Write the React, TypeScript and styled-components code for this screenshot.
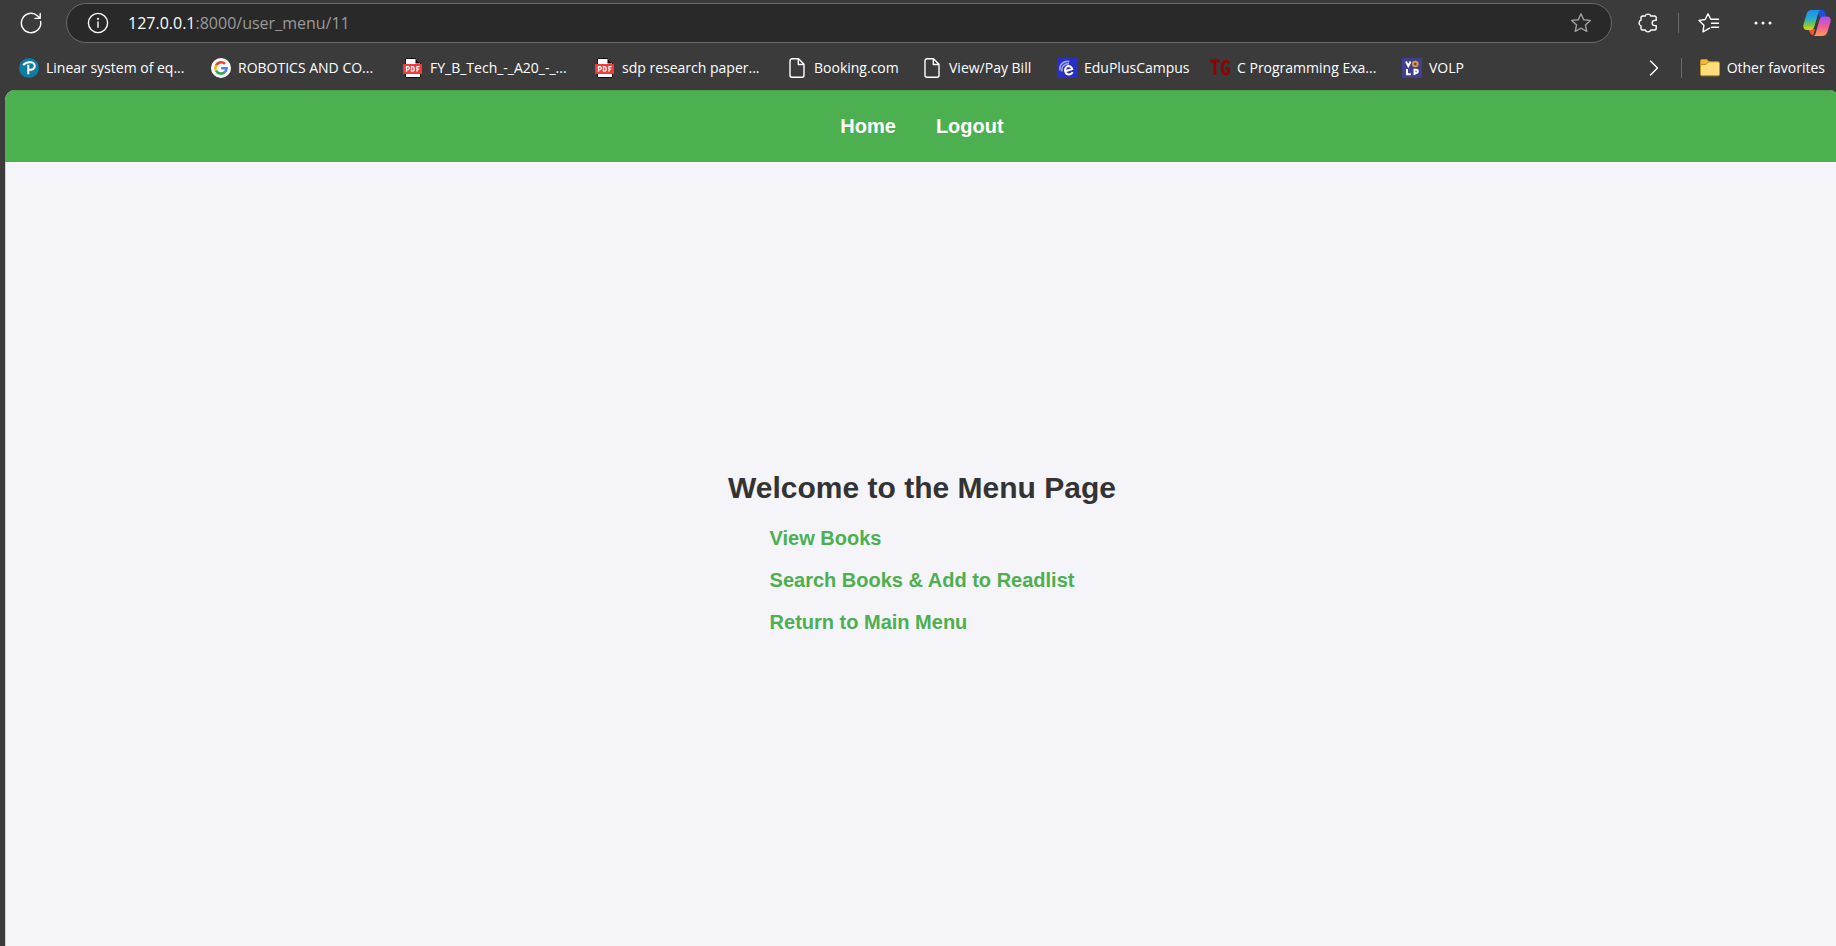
import React from "react";
import styled, { createGlobalStyle } from "styled-components";

const GlobalStyle = createGlobalStyle`
  *, *::before, *::after { box-sizing: border-box; }
  body { margin: 0; background: #3b3b3b; }
`;

const Window = styled.div`
  min-height: 100vh;
  display: flex;
  flex-direction: column;
  overflow: hidden;
  background: #3b3b3b;
  color: #fff;
  font-family: "Open Sans", "Noto Sans", sans-serif;
`;

const Toolbar = styled.header`
  display: flex;
  align-items: center;
  height: 46px;
  padding: 0 5px 0 17px;
`;

const IconButton = styled.button`
  display: grid;
  place-items: center;
  flex: none;
  width: 28px;
  height: 28px;
  padding: 0;
  border: 0;
  background: none;
  color: inherit;
`;

const AddressBar = styled.form`
  flex: 1;
  min-width: 0;
  display: flex;
  align-items: center;
  height: 40px;
  margin: 0 22px 0 21px;
  padding: 0 16px 0 17px;
  border: 1px solid #6b6b6b;
  border-radius: 20px;
  background: #292929;
  font-size: 16px;
  line-height: 22px;
`;

const Host = styled.label`
  margin-left: 16px;
`;

const Path = styled.input`
  flex: 1;
  min-width: 0;
  padding: 0;
  border: 0;
  outline: 0;
  background: none;
  color: #9a9a9a;
  font: inherit;
`;

const ToolGroup = styled.div<{ $gap: number }>`
  display: flex;
  align-items: center;
  gap: ${(p) => p.$gap}px;
`;

const Divider = styled.span`
  flex: none;
  width: 1px;
  height: 20px;
  background: #6b6b6b;
`;

const BookmarkBar = styled.nav`
  display: flex;
  align-items: center;
  height: 44px;
  padding: 0 11px 0 19px;
  font-size: 14px;
`;

const BookmarkList = styled.ul`
  flex: 1;
  min-width: 0;
  display: flex;
  margin: 0;
  padding: 0;
  list-style: none;
  overflow: hidden;
`;

const BookmarkItem = styled.li<{ $width: number }>`
  flex: none;
  width: ${(p) => p.$width}px;
`;

const BookmarkLink = styled.a`
  display: flex;
  align-items: center;
  gap: 7px;
  color: #fff;
  line-height: 20px;
  text-decoration: none;
  white-space: nowrap;

  svg { flex: none; }
`;

const BookmarkTools = styled.div`
  display: flex;
  align-items: center;
  gap: 13px;

  ${Divider} { margin-right: 5px; }
`;

const Page = styled.div`
  flex: 1;
  display: flex;
  flex-direction: column;
  margin: 0 -3px 0 5px;
  border-radius: 10px 10px 0 0;
  overflow: hidden;
  background: #f4f4f9;
  font-family: "Liberation Sans", Arial, sans-serif;
  font-weight: 700;
  font-size: 20px;
`;

const SiteNav = styled.nav`
  display: flex;
  justify-content: center;
  align-items: center;
  gap: 40px;
  height: 72px;
  background: #4caf50;
  box-shadow: inset 0 1px #479f4b;
`;

const NavLink = styled.a`
  color: #fff;
  text-decoration: none;
`;

const Main = styled.main`
  flex: 1;
  display: flex;
  flex-direction: column;
  align-items: center;
  justify-content: center;
  padding-bottom: 5px;
  box-shadow: inset 1px 0 #d0d0d6;
`;

const Title = styled.h1`
  margin: 0 0 22px;
  color: #333;
  font-size: 30px;
  line-height: 34px;
`;

const Menu = styled.ul`
  display: grid;
  gap: 20px;
  margin: 0;
  padding: 0;
  list-style: none;
  line-height: 22px;
`;

const MenuLink = styled.a`
  color: #4caf50;
  text-decoration: none;
`;

const Line = styled.svg.attrs({ fill: "none", stroke: "currentColor", strokeLinecap: "round", strokeLinejoin: "round" })`
  display: block;
  stroke-width: 1.4px;
`;

const STAR = "M12 2.8l2.7 5.9 6.6.7-4.9 4.5 1.4 6.6-5.8-3.3-5.8 3.3 1.4-6.6L2.7 9.4l6.6-.7z";

const RefreshIcon = () => (
  <Line width="24" height="24" viewBox="0 0 24 24">
    <path d="M21.6 10.4A9.7 9.7 0 1 1 18.6 4.9l2.2 2.1M21.2 2.4v5h-5.2" />
  </Line>
);

const InfoIcon = () => (
  <Line width="24" height="24" viewBox="0 0 24 24">
    <circle cx="12" cy="12" r="9.6" />
    <path d="M12 11v5.2" />
    <circle cx="12" cy="7.8" r=".4" fill="currentColor" />
  </Line>
);

const StarIcon = () => (
  <Line width="24" height="24" viewBox="0 0 24 24" color="#a0a0a0">
    <path d={STAR} />
  </Line>
);

const PuzzleIcon = () => (
  <Line width="24" height="24" viewBox="0 0 24 24">
    <path d="M6.800 5H9.200a2.900 2.600 0 0 1 5.600 0h3.600c1 0 1.800.8 1.800 1.800v2.600h-1.400a2.600 2.600 0 0 0 0 5.200h1.400v2.600c0 1-.8 1.800-1.800 1.800h-3.600a2.900 2.600 0 0 1-5.600 0H6.800c-1 0-1.800-.8-1.800-1.800v-2.400a2.600 2.900 0 0 1 0-5.600V6.800C5 5.800 5.800 5 6.800 5z" />
  </Line>
);

const FavoritesIcon = () => (
  <Line width="24" height="24" viewBox="0 0 24 24">
    <path d="M12.600 17.200L6 20.800l.9-6.500L2 9.400l6.200-.9L11 2.800l2.800 5.500h7.700M14.500 12.300h7M14.500 16.300h7" />
  </Line>
);

const DotsIcon = () => (
  <svg width="24" height="24" viewBox="0 0 24 24" fill="currentColor">
    <circle cx="5" cy="12" r="1.5" />
    <circle cx="12" cy="12" r="1.5" />
    <circle cx="19" cy="12" r="1.5" />
  </svg>
);

const CopilotIcon = () => (
  <svg width="28" height="28" viewBox="0 0 28 28">
    <defs>
      <linearGradient id="cpLeft" x1="0" y1="0" x2="0" y2="1">
        <stop offset="0" stopColor="#1b8fe8" />
        <stop offset=".4" stopColor="#22a8d8" />
        <stop offset=".7" stopColor="#6cc35a" />
        <stop offset="1" stopColor="#f2cb10" />
      </linearGradient>
      <linearGradient id="cpRight" x1="0" y1="0" x2="0" y2="1">
        <stop offset="0" stopColor="#a950f0" />
        <stop offset=".5" stopColor="#ee5c9c" />
        <stop offset="1" stopColor="#ff9a50" />
      </linearGradient>
    </defs>
    <path d="M13 1h6c2 0 2.700 1 3.200 2.800L23.400 8H17z" fill="#1d50d8" />
    <path d="M5 20h7l-1.500 5.800C8.500 26.300 7.400 25 7 23.500z" fill="#f0552c" />
    <path d="M9 1h8.500c-1.400.6-1.900 1.800-2.400 3.500l-3.600 12.700C10.800 19.600 9.600 21 7.200 21H4.100C1 21-.3 18.700.500 15.500L3.600 5C4.500 2.200 6 1 9 1z" fill="url(#cpLeft)" />
    <path d="M19 27h-8.500c1.400-.6 1.900-1.800 2.400-3.500l3.600-12.700C17.200 8.400 18.400 7.500 20.800 7.500h3.100c3.100 0 4.400 2.300 3.600 5.500L24.400 23C23.500 25.800 22 27 19 27z" fill="url(#cpRight)" />
  </svg>
);

const PearsonIcon = () => (
  <svg width="20" height="20" viewBox="0 0 20 20">
    <circle cx="10" cy="10" r="10" fill="#117ca3" />
    <path d="M4.200 7.200C6 4.700 9 3.800 12 4.300c3.200.5 4.500 2.900 3.400 5.200-.9 1.900-3.200 2.700-5.200 2.100M9.300 6.800v9.500" fill="none" stroke="#fff" strokeWidth="2" />
  </svg>
);

const GoogleIcon = () => (
  <svg width="20" height="20" viewBox="0 0 20 20">
    <circle cx="10" cy="10" r="10" fill="#fff" />
    <g fill="none" strokeWidth="2.600">
      <path d="M14 5.900A5.700 5.700 0 0 0 5 7.300" stroke="#ea4335" />
      <path d="M5 7.300a5.700 5.700 0 0 0 0 5.400" stroke="#fbbc05" />
      <path d="M5 12.700a5.700 5.700 0 0 0 8.700 1.600" stroke="#34a853" />
      <path d="M13.700 14.300a5.700 5.700 0 0 0 1.900-4H10.200" stroke="#4285f4" />
    </g>
  </svg>
);

const PdfIcon = () => (
  <svg width="20" height="20" viewBox="0 0 20 20">
    <path d="M2.500.5h10.500l4.500 4.500v14.500h-15z" fill="#fff" stroke="#111" />
    <path d="M12.500.5l5 5h-5z" fill="#111" />
    <rect x="0" y="6" width="19" height="10" rx="1" fill="#f23c3c" />
    <path d="M3.500 13.800V8.700h1.300a1.400 1.400 0 0 1 0 2.900H3.500M8.500 8.700v4.400h.7c2.600 0 2.600-4.400 0-4.400zM14 13.800V8.700h2.600M14 11.300h2.200" fill="none" stroke="#fff" strokeWidth="1.300" />
  </svg>
);

const FileIcon = () => (
  <Line width="20" height="20" viewBox="0 0 20 20">
    <path d="M5 .8h6.500L17 6.300V17.200a2 2 0 0 1-2 2H5a2 2 0 0 1-2-2V2.800a2 2 0 0 1 2-2zM11.300 1v5.500H17" />
  </Line>
);

const EduIcon = () => (
  <svg width="20" height="20" viewBox="0 0 20 20" fill="none">
    <rect width="20" height="20" fill="#2a2fc4" />
    <path d="M3 12.500C2 7 6 2.500 12.500 3.500M5 13.500C4 9 7 5.500 12 5.600" stroke="#9fa3ee" strokeWidth="1.600" />
    <path d="M8.200 13.300l7-2.300c-.8-3-4-3.700-5.900-1.900-2.500 2.600-1 7.300 2.400 7.300 1.900 0 3.200-.9 3.900-2.300" stroke="#fff" strokeWidth="2" />
  </svg>
);

const TgIcon = () => (
  <svg width="20" height="20" viewBox="0 0 20 20" fill="none" stroke="#8c0505" strokeWidth="3">
    <path d="M0 3h9.500M4.800 3v14M19 5.500c-1.500-3-6.800-3.300-6.800 4.300 0 8.300 6.200 6.700 6.300 4.200v-3.500h-3" />
  </svg>
);

const VolpIcon = () => (
  <svg width="20" height="20" viewBox="0 0 20 20" fill="none" stroke="#fff" strokeWidth="2">
    <rect width="20" height="20" fill="#40408f" stroke="none" />
    <path d="M4 3.500L6.300 8l2.300-4.500M5 11v5.300h3.800M12.500 17v-5.300h1.700a1.500 1.500 0 0 1 0 3.200h-1.700" />
    <circle cx="13.300" cy="6" r="2.300" stroke="#e09a28" />
  </svg>
);

const ChevronIcon = () => (
  <Line width="20" height="20" viewBox="0 0 20 20">
    <path d="M6.500 3l7 7-7 7" />
  </Line>
);

const FolderIcon = () => (
  <svg width="20" height="20" viewBox="0 0 20 20" stroke="#c4921c">
    <path d="M.5 3A1.500 1.500 0 0 1 2 1.500h5L9 3.800v2.700H.5z" fill="#f5b82e" />
    <path d="M.5 6.500h5c1.500 0 2-2.700 3.500-2.700h9A1.500 1.500 0 0 1 19.500 5.300v11a1.500 1.500 0 0 1-1.500 1.500H2a1.500 1.500 0 0 1-1.500-1.500z" fill="#ffdc7c" />
  </svg>
);

const bookmarks = [
  { title: "Linear system of eq...", width: 192, Icon: PearsonIcon },
  { title: "ROBOTICS AND CO...", width: 192, Icon: GoogleIcon },
  { title: "FY_B_Tech_-_A20_-_...", width: 192, Icon: PdfIcon },
  { title: "sdp research paper...", width: 192, Icon: PdfIcon },
  { title: "Booking.com", width: 135, Icon: FileIcon },
  { title: "View/Pay Bill", width: 135, Icon: FileIcon },
  { title: "EduPlusCampus", width: 153, Icon: EduIcon },
  { title: "C Programming Exa...", width: 192, Icon: TgIcon },
  { title: "VOLP", width: 135, Icon: VolpIcon },
];

const menuItems = ["View Books", "Search Books & Add to Readlist", "Return to Main Menu"];

export default function App() {
  return (
    <Window>
      <GlobalStyle />
      <Toolbar>
        <IconButton aria-label="Refresh"><RefreshIcon /></IconButton>
        <AddressBar>
          <IconButton type="button" aria-label="Site information"><InfoIcon /></IconButton>
          <Host htmlFor="address">127.0.0.1</Host>
          <Path id="address" type="text" defaultValue=":8000/user_menu/11" />
          <IconButton type="button" aria-label="Add to favorites"><StarIcon /></IconButton>
        </AddressBar>
        <ToolGroup $gap={26}>
          <ToolGroup $gap={16}>
            <IconButton aria-label="Extensions"><PuzzleIcon /></IconButton>
            <Divider />
            <IconButton aria-label="Favorites"><FavoritesIcon /></IconButton>
          </ToolGroup>
          <IconButton aria-label="Settings and more"><DotsIcon /></IconButton>
          <IconButton aria-label="Copilot"><CopilotIcon /></IconButton>
        </ToolGroup>
      </Toolbar>
      <BookmarkBar aria-label="Favorites bar">
        <BookmarkList>
          {bookmarks.map(({ title, width, Icon }) => (
            <BookmarkItem key={title} $width={width}>
              <BookmarkLink href="#"><Icon />{title}</BookmarkLink>
            </BookmarkItem>
          ))}
        </BookmarkList>
        <BookmarkTools>
          <IconButton aria-label="More favorites"><ChevronIcon /></IconButton>
          <Divider />
          <BookmarkLink href="#"><FolderIcon />Other favorites</BookmarkLink>
        </BookmarkTools>
      </BookmarkBar>
      <Page>
        <SiteNav>
          <NavLink href="#">Home</NavLink>
          <NavLink href="#">Logout</NavLink>
        </SiteNav>
        <Main>
          <Title>Welcome to the Menu Page</Title>
          <Menu>
            {menuItems.map((item) => (
              <li key={item}><MenuLink href="#">{item}</MenuLink></li>
            ))}
          </Menu>
        </Main>
      </Page>
    </Window>
  );
}
